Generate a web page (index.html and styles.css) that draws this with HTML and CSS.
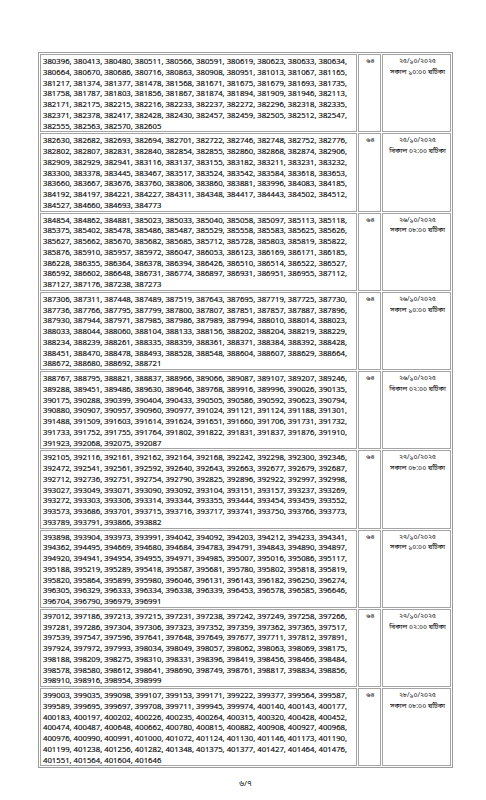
FILE: index.html
```html
<!DOCTYPE html>
<html lang="bn">
<head>
<meta charset="utf-8">
<title>৬/৭</title>
<link rel="stylesheet" href="styles.css">
</head>
<body>
<div class="page">
<table class="roll">
<colgroup><col class="c-num"><col class="c-count"><col class="c-time"></colgroup>
<tr>
<td class="nums">380396, 380413, 380480, 380511, 380566, 380591, 380619, 380623, 380633, 380634,<br>380664, 380670, 380686, 380716, 380863, 380908, 380951, 381013, 381067, 381165,<br>381217, 381374, 381377, 381478, 381568, 381671, 381675, 381679, 381693, 381735,<br>381758, 381787, 381803, 381856, 381867, 381874, 381894, 381909, 381946, 382113,<br>382171, 382175, 382215, 382216, 382233, 382237, 382272, 382296, 382318, 382335,<br>382371, 382378, 382417, 382428, 382430, 382457, 382459, 382505, 382512, 382547,<br>382555, 382563, 382570, 382605</td>
<td class="count">৬৪</td>
<td class="time">২৫/১০/২০২৫<br>সকাল ১০:০০ ঘটিকা</td>
</tr>
<tr>
<td class="nums">382630, 382682, 382693, 382694, 382701, 382722, 382746, 382748, 382752, 382776,<br>382802, 382807, 382831, 382840, 382854, 382855, 382860, 382868, 382874, 382906,<br>382909, 382929, 382941, 383116, 383137, 383155, 383182, 383211, 383231, 383232,<br>383300, 383378, 383445, 383467, 383517, 383524, 383542, 383584, 383618, 383653,<br>383660, 383667, 383676, 383760, 383806, 383860, 383881, 383996, 384083, 384185,<br>384192, 384197, 384221, 384227, 384311, 384348, 384417, 384443, 384502, 384512,<br>384527, 384660, 384693, 384773</td>
<td class="count">৬৪</td>
<td class="time">২৫/১০/২০২৫<br>বিকাল ০২:০০ ঘটিকা</td>
</tr>
<tr>
<td class="nums">384854, 384862, 384881, 385023, 385033, 385040, 385058, 385097, 385113, 385118,<br>385375, 385402, 385478, 385486, 385487, 385529, 385558, 385583, 385625, 385626,<br>385627, 385662, 385670, 385682, 385685, 385712, 385728, 385803, 385819, 385822,<br>385876, 385910, 385957, 385972, 386047, 386053, 386123, 386169, 386171, 386185,<br>386228, 386355, 386364, 386378, 386394, 386426, 386510, 386514, 386522, 386527,<br>386592, 386602, 386648, 386731, 386774, 386897, 386931, 386951, 386955, 387112,<br>387127, 387176, 387238, 387273</td>
<td class="count">৬৪</td>
<td class="time">২৬/১০/২০২৫<br>সকাল ০৮:০০ ঘটিকা</td>
</tr>
<tr>
<td class="nums">387306, 387311, 387448, 387489, 387519, 387643, 387695, 387719, 387725, 387730,<br>387736, 387766, 387795, 387799, 387800, 387807, 387851, 387857, 387887, 387896,<br>387930, 387944, 387971, 387985, 387986, 387989, 387994, 388010, 388014, 388023,<br>388033, 388044, 388060, 388104, 388133, 388156, 388202, 388204, 388219, 388229,<br>388234, 388239, 388261, 388335, 388359, 388361, 388371, 388384, 388392, 388428,<br>388451, 388470, 388478, 388493, 388528, 388548, 388604, 388607, 388629, 388664,<br>388672, 388680, 388692, 388721</td>
<td class="count">৬৪</td>
<td class="time">২৬/১০/২০২৫<br>সকাল ১০:০০ ঘটিকা</td>
</tr>
<tr>
<td class="nums">388767, 388795, 388821, 388837, 388966, 389066, 389087, 389107, 389207, 389246,<br>389288, 389451, 389486, 389630, 389646, 389768, 389916, 389996, 390026, 390135,<br>390175, 390288, 390399, 390404, 390433, 390505, 390586, 390592, 390623, 390794,<br>390880, 390907, 390957, 390960, 390977, 391024, 391121, 391124, 391188, 391301,<br>391488, 391509, 391603, 391614, 391624, 391651, 391660, 391706, 391731, 391732,<br>391733, 391752, 391755, 391764, 391802, 391822, 391831, 391837, 391876, 391910,<br>391923, 392068, 392075, 392087</td>
<td class="count">৬৪</td>
<td class="time">২৬/১০/২০২৫<br>বিকাল ০২:০০ ঘটিকা</td>
</tr>
<tr>
<td class="nums">392105, 392116, 392161, 392162, 392164, 392168, 392242, 392298, 392300, 392346,<br>392472, 392541, 392561, 392592, 392640, 392643, 392663, 392677, 392679, 392687,<br>392712, 392736, 392751, 392754, 392790, 392825, 392896, 392922, 392997, 392998,<br>393027, 393049, 393071, 393090, 393092, 393104, 393151, 393157, 393237, 393269,<br>393272, 393303, 393306, 393314, 393344, 393355, 393444, 393454, 393459, 393552,<br>393573, 393686, 393701, 393715, 393716, 393717, 393741, 393750, 393766, 393773,<br>393789, 393791, 393866, 393882</td>
<td class="count">৬৪</td>
<td class="time">২৭/১০/২০২৫<br>সকাল ০৮:০০ ঘটিকা</td>
</tr>
<tr>
<td class="nums">393898, 393904, 393973, 393991, 394042, 394092, 394203, 394212, 394233, 394341,<br>394362, 394495, 394669, 394680, 394684, 394783, 394791, 394843, 394890, 394897,<br>394920, 394941, 394954, 394955, 394971, 394985, 395007, 395016, 395086, 395117,<br>395188, 395219, 395289, 395418, 395587, 395681, 395780, 395802, 395818, 395819,<br>395820, 395864, 395899, 395980, 396046, 396131, 396143, 396182, 396250, 396274,<br>396305, 396329, 396333, 396334, 396338, 396339, 396453, 396578, 396585, 396646,<br>396704, 396790, 396979, 396991</td>
<td class="count">৬৪</td>
<td class="time">২৭/১০/২০২৫<br>সকাল ১০:০০ ঘটিকা</td>
</tr>
<tr>
<td class="nums">397012, 397186, 397213, 397215, 397231, 397238, 397242, 397249, 397258, 397266,<br>397281, 397286, 397304, 397306, 397323, 397352, 397359, 397362, 397365, 397517,<br>397539, 397547, 397596, 397641, 397648, 397649, 397677, 397711, 397812, 397891,<br>397924, 397972, 397993, 398034, 398049, 398057, 398062, 398063, 398069, 398175,<br>398188, 398209, 398275, 398310, 398331, 398396, 398419, 398456, 398466, 398484,<br>398578, 398580, 398612, 398641, 398690, 398749, 398761, 398817, 398834, 398856,<br>398910, 398916, 398954, 398999</td>
<td class="count">৬৪</td>
<td class="time">২৭/১০/২০২৫<br>বিকাল ০২:০০ ঘটিকা</td>
</tr>
<tr>
<td class="nums">399003, 399035, 399098, 399107, 399153, 399171, 399222, 399377, 399564, 399587,<br>399589, 399695, 399697, 399708, 399711, 399945, 399974, 400140, 400143, 400177,<br>400183, 400197, 400202, 400226, 400235, 400264, 400315, 400320, 400428, 400452,<br>400474, 400487, 400648, 400662, 400780, 400815, 400882, 400908, 400927, 400968,<br>400976, 400990, 400991, 401000, 401072, 401124, 401130, 401146, 401173, 401190,<br>401199, 401238, 401256, 401282, 401348, 401375, 401377, 401427, 401464, 401476,<br>401551, 401564, 401604, 401646</td>
<td class="count">৬৪</td>
<td class="time">২৮/১০/২০২৫<br>সকাল ০৮:০০ ঘটিকা</td>
</tr>
</table>
<div class="pageno">৬/৭</div>
</div>
</body>
</html>
```

FILE: styles.css
```css
html, body {
  margin: 0;
  padding: 0;
  background: #ffffff;
}

.page {
  padding: 52px 0 0 38px;
  font-family: "Open Sans", "Noto Sans", "Noto Sans Bengali", "Lohit Bengali", "FreeSans", sans-serif;
  color: #000000;
}

.roll {
  table-layout: fixed;
  width: 415px;
  border-collapse: separate;
  border-spacing: 1px;
  border: 1px solid #9c9c9c;
}

.c-num { width: 317px; }
.c-count { width: 23px; }
.c-time { width: 69px; }

.roll td {
  border: 1px solid #a4a4a4;
  vertical-align: top;
  padding: 1px 0 0 2px;
  line-height: 10.75px;
  box-sizing: border-box;
}

.nums {
  font-size: 7.75px;
  white-space: nowrap;
  overflow: hidden;
  -webkit-text-stroke: 0.15px #000;
}

.count {
  font-size: 7px;
  text-align: center;
  padding-left: 0;
}

.time {
  font-size: 6.8px;
  text-align: center;
  white-space: nowrap;
  padding: 1px 0 0 4px;
}

.pageno {
  width: 415px;
  text-align: center;
  font-size: 8px;
  line-height: 10px;
  margin-top: 10px;
}
```
